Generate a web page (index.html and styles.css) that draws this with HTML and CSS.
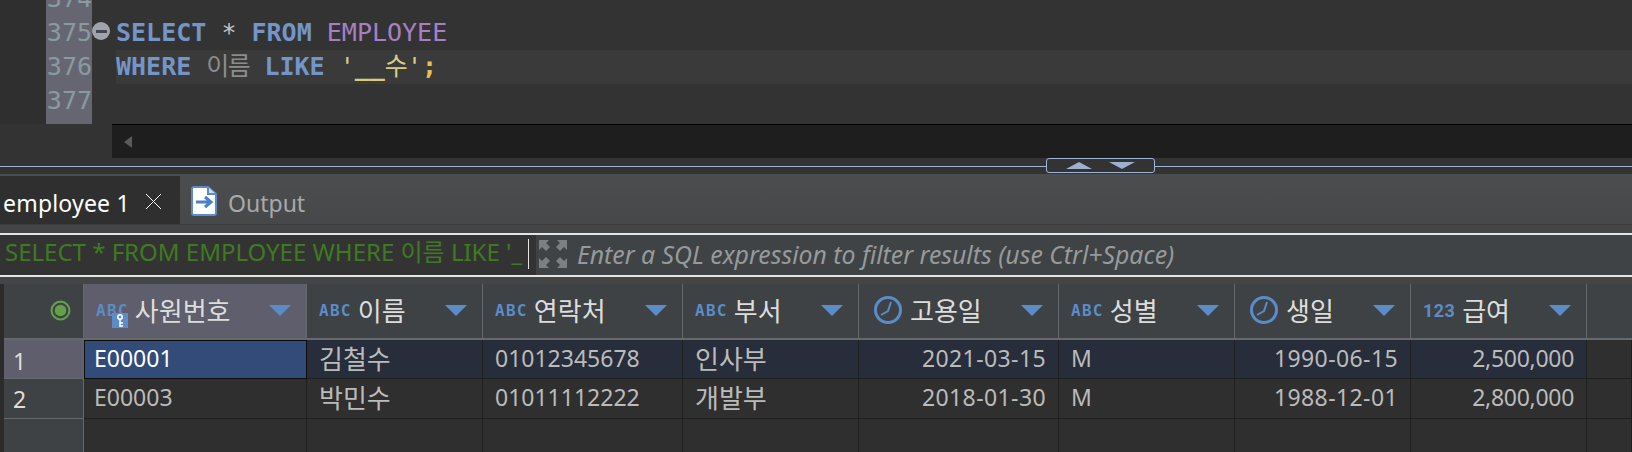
FILE: index.html
```html
<!DOCTYPE html>
<html lang="ko">
<head>
  <meta charset="UTF-8">
  <title>SQL Editor</title>
  <link rel="stylesheet" href="styles.css">
</head>
<body>

  <!-- SQL editor -->
  <div class="editor">
    <div class="editor-top">
      <div class="outer-margin"></div>
      <div class="gutter">
        <div class="gutter-lines">
          <div class="line-no">374</div>
          <div class="line-no">375</div>
          <div class="line-no">376</div>
          <div class="line-no">377</div>
        </div>
      </div>
      <div class="fold-col">
        <div class="fold"><span class="fold-minus"></span></div>
      </div>
      <div class="code">
        <div class="code-lines">
          <div class="code-line"></div>
          <div class="code-line"><span class="kw">SELECT</span> <span class="star">*</span> <span class="kw">FROM</span> <span class="table-name">EMPLOYEE</span></div>
          <div class="code-line current"><span class="kw">WHERE</span> <span class="column-name">이름</span> <span class="kw">LIKE</span> <span class="str">'<b>__</b><span class="str-ko">수</span>'</span><span class="semi">;</span></div>
          <div class="code-line"></div>
        </div>
      </div>
    </div>
    <div class="hscroll-row">
      <div class="hscroll"><span class="hscroll-arrow"></span></div>
    </div>
  </div>

  <!-- sash between editor and results -->
  <div class="sash">
    <div class="sash-btn">
      <span class="sash-up"></span>
      <span class="sash-down"></span>
    </div>
  </div>

  <div class="results-head">
    <!-- result tabs -->
    <div class="tabs">
      <div class="tab active">
        <span>employee 1</span>
        <svg class="tab-close" width="17" height="17" viewBox="0 0 17 17"><path d="M1 1L16 16M16 1L1 16" stroke="#fff" stroke-width="1" fill="none"/></svg>
      </div>
      <div class="tab">
        <svg width="26" height="30" viewBox="0 0 26 30">
          <path d="M1 3Q1 1 3 1H17L25 8V27Q25 29 23 29H3Q1 29 1 27Z" fill="#fff" stroke="#5b8cc9" stroke-width="2"/>
          <path d="M17 1V8H25" fill="#cfdcee" stroke="#5b8cc9" stroke-width="2"/>
          <path d="M5 16H18M14 11L20 16L14 21" stroke="#4a80c4" stroke-width="3" fill="none"/>
        </svg>
        <span>Output</span>
      </div>
    </div>

    <!-- filter bar -->
    <div class="filter">
      <div class="filter-query"><span class="filter-text">SELECT * FROM EMPLOYEE WHERE 이름 LIKE '_</span></div>
      <div class="filter-input">
        <svg width="30" height="30" viewBox="0 0 30 30" fill="#7d8082">
          <path d="M1 1H11L8 4L12 8L8 12L4 8L1 11Z"/>
          <path d="M29 1H19L22 4L18 8L22 12L26 8L29 11Z"/>
          <path d="M1 29H11L8 26L12 22L8 18L4 22L1 19Z"/>
          <path d="M29 29H19L22 26L18 22L22 18L26 22L29 19Z"/>
        </svg>
        <span class="filter-hint">Enter a SQL expression to filter results (use Ctrl+Space)</span>
      </div>
    </div>
  </div>

  <!-- result grid -->
  <div class="grid-wrap">
    <div class="grid">
      <div class="hd corner">
        <svg width="21" height="21" viewBox="0 0 20 20"><circle cx="10" cy="10" r="8.5" fill="none" stroke="#64a04a" stroke-width="2"/><circle cx="10" cy="10" r="5.5" fill="#64a04a"/></svg>
      </div>
      <div class="hd selected">
        <span class="type-abc">ABC</span>
        <svg class="key" width="16" height="15" viewBox="0 0 16 15"><rect width="16" height="15" fill="#5b8cc9"/><circle cx="8" cy="4" r="2.2" fill="none" stroke="#fff" stroke-width="1.5"/><path d="M8 6V14M8 10H11M8 13H11" stroke="#fff" stroke-width="1.5"/></svg>
        <span class="hd-label">사원번호</span><span class="sort"></span>
      </div>
      <div class="hd"><span class="type-abc">ABC</span><span class="hd-label">이름</span><span class="sort"></span></div>
      <div class="hd"><span class="type-abc">ABC</span><span class="hd-label">연락처</span><span class="sort"></span></div>
      <div class="hd"><span class="type-abc">ABC</span><span class="hd-label">부서</span><span class="sort"></span></div>
      <div class="hd date">
        <svg class="clock" width="30" height="30" viewBox="0 0 30 30"><circle cx="15" cy="15" r="12.5" fill="none" stroke="#5b8cc9" stroke-width="3"/><path d="M18 7L15 16L8 20" fill="none" stroke="#5b8cc9" stroke-width="2"/></svg>
        <span class="hd-label">고용일</span><span class="sort"></span>
      </div>
      <div class="hd"><span class="type-abc">ABC</span><span class="hd-label">성별</span><span class="sort"></span></div>
      <div class="hd date">
        <svg class="clock" width="30" height="30" viewBox="0 0 30 30"><circle cx="15" cy="15" r="12.5" fill="none" stroke="#5b8cc9" stroke-width="3"/><path d="M18 7L15 16L8 20" fill="none" stroke="#5b8cc9" stroke-width="2"/></svg>
        <span class="hd-label">생일</span><span class="sort"></span>
      </div>
      <div class="hd"><span class="type-num">123</span><span class="hd-label">급여</span><span class="sort"></span></div>
      <div class="hd blank"></div>

      <div class="row-no active">1</div>
      <div class="cell hl focus">E00001</div>
      <div class="cell hl ko">김철수</div>
      <div class="cell hl">01012345678</div>
      <div class="cell hl ko">인사부</div>
      <div class="cell hl right date-val">2021-03-15</div>
      <div class="cell hl">M</div>
      <div class="cell hl right date-val">1990-06-15</div>
      <div class="cell hl right num-val">2,500,000</div>
      <div class="cell"></div>

      <div class="row-no">2</div>
      <div class="cell first">E00003</div>
      <div class="cell ko">박민수</div>
      <div class="cell">01011112222</div>
      <div class="cell ko">개발부</div>
      <div class="cell right date-val">2018-01-30</div>
      <div class="cell">M</div>
      <div class="cell right date-val">1988-12-01</div>
      <div class="cell right num-val">2,800,000</div>
      <div class="cell"></div>

      <div class="row-no"></div>
      <div class="cell"></div>
      <div class="cell"></div>
      <div class="cell"></div>
      <div class="cell"></div>
      <div class="cell"></div>
      <div class="cell"></div>
      <div class="cell"></div>
      <div class="cell"></div>
      <div class="cell"></div>
    </div>
  </div>

</body>
</html>
```

FILE: styles.css
```css
html, body {
  margin: 0;
  height: 452px;
  overflow: hidden;
}

body {
  background: #333;
  font-family: "Noto Sans", "Noto Sans CJK KR", sans-serif;
  font-size: 23px;
  color: #bbb;
  position: relative;
}

/* editor */
.editor {
  height: 166px;
  background: #333;
  overflow: hidden;
}

.editor-top {
  display: flex;
  height: 124px;
  overflow: hidden;
}

.outer-margin {
  width: 46px;
  background: #2f2f2f;
}

.gutter {
  width: 46px;
  background: #666673;
  overflow: hidden;
}

.gutter-lines,
.code-lines {
  margin-top: -18px;
}

.line-no,
.code-line {
  height: 34px;
  line-height: 34px;
  font-family: "DejaVu Sans Mono", "Noto Sans CJK KR", monospace;
  font-size: 25px;
  white-space: pre;
}

.line-no {
  color: #8a9aa0;
  text-align: right;
  overflow: hidden;
}

.fold-col {
  width: 24px;
  background: #333;
  padding-top: 22px;
  box-sizing: border-box;
}

.fold {
  width: 18px;
  height: 18px;
  border-radius: 50%;
  background: #9fa3ab;
  display: flex;
  align-items: center;
  justify-content: center;
}

.fold-minus {
  width: 11px;
  height: 3px;
  background: #444650;
}

.code {
  flex: 1;
}

.current {
  background: #3a3a3a;
}

.kw {
  color: #7395c8;
  font-weight: bold;
}

.star { color: #c4c4c4; }
.table-name { color: #a87fc4; }
.column-name { color: #8c8c8c; letter-spacing: -1.5px; }
.str { color: #d6cd84; }
.str-ko { letter-spacing: -1px; }
.semi { color: #e8c04c; font-weight: bold; }

.hscroll-row {
  padding-left: 112px;
}

.hscroll {
  height: 33px;
  background: #1e1e1e;
  border-top: 1px solid #000;
  display: flex;
  align-items: center;
  padding-left: 12px;
}

.hscroll-arrow {
  width: 0;
  height: 0;
  border-top: 6px solid transparent;
  border-bottom: 6px solid transparent;
  border-right: 8px solid #5a5a5a;
}

/* sash */
.sash {
  height: 1px;
  background: #a0b4d8;
  margin-bottom: 7px;
}

.sash-btn {
  position: absolute;
  left: 1046px;
  top: 158px;
  width: 109px;
  height: 15px;
  box-sizing: border-box;
  border: 1px solid #a0b4d8;
  border-radius: 3px;
  background: #333;
  display: flex;
  justify-content: center;
  align-items: center;
  gap: 17px;
}

.sash-up {
  width: 0;
  height: 0;
  border-left: 13px solid transparent;
  border-right: 13px solid transparent;
  border-bottom: 7px solid #9db0d0;
}

.sash-down {
  width: 0;
  height: 0;
  border-left: 13px solid transparent;
  border-right: 13px solid transparent;
  border-top: 7px solid #9db0d0;
}

.results-head {
  background: #434547;
  padding-bottom: 7px;
}

/* tabs */
.tabs {
  display: flex;
  height: 51px;
  padding-top: 2px;
  box-sizing: border-box;
  background: linear-gradient(#4c4d4f, #47484a);
  border-bottom: 1px solid #3c3c3c;
}

.tab {
  display: flex;
  align-items: center;
  gap: 11px;
  padding-left: 11px;
  padding-top: 5px;
  box-sizing: border-box;
  color: #a9a9a9;
  font-size: 23px;
}

.tab svg {
  margin-top: -3px;
}

.tab.active {
  width: 180px;
  padding-left: 3px;
  gap: 15px;
  background: #2f2f2f;
  color: #fff;
  letter-spacing: 0.2px;
}

/* filter */
.filter {
  display: flex;
  height: 44px;
  margin-top: 8px;
  box-sizing: border-box;
  border-top: 2px solid #e4e4e4;
  border-bottom: 2px solid #e4e4e4;
  background: #3f4345;
}

.filter-query {
  width: 536px;
  box-sizing: border-box;
  flex-shrink: 0;
  background: #333;
  padding: 3px 0 0 5px;
}

.filter-text {
  display: inline-block;
  width: 523px;
  height: 30px;
  line-height: 26px;
  margin-top: 1px;
  border-right: 1px solid #e4e4e4;
  white-space: pre;
  color: #3f7a22;
  font-size: 24px;
  vertical-align: top;
}

.filter-input {
  display: flex;
  align-items: center;
  gap: 9px;
  padding-left: 2px;
}

.filter-input svg {
  margin-top: -3px;
}

.filter-hint {
  color: #979a9c;
  font-style: italic;
  font-size: 24.8px;
  margin-top: -2px;
  white-space: nowrap;
}

/* result grid */
.grid-wrap {
  height: 170px;
  padding-left: 4px;
  background: #2b2b2b;
}

.grid {
  display: grid;
  grid-template-columns: 80px 223px 176px 200px 176px 200px 176px 176px 176px 45px;
  grid-template-rows: 56px 39px 40px 35px;
}

.hd {
  position: relative;
  display: flex;
  align-items: center;
  padding: 0 15px 2px 12px;
  box-sizing: border-box;
  background: #3e4245;
  border-right: 1px solid #66696b;
  border-bottom: 2px solid #66696b;
  color: #ddd;
  font-size: 26px;
}

.hd.corner {
  justify-content: flex-end;
  padding-right: 12px;
}

.hd.selected {
  background: #5f5e6c;
}

.hd.date {
  padding-left: 14px;
}

.hd.blank {
  border-right: 0;
}

.type-abc {
  font-family: "DejaVu Sans Mono", monospace;
  font-weight: bold;
  font-size: 16px;
  letter-spacing: 1.3px;
  color: #5b8cc9;
  margin-right: 6px;
}

.type-num {
  font-family: "Roboto", sans-serif;
  font-weight: bold;
  font-size: 18px;
  letter-spacing: 0.4px;
  color: #5b8cc9;
  margin-right: 7px;
}

.clock {
  margin-right: 7px;
}

.key {
  position: absolute;
  left: 28px;
  top: 29px;
}

.sort {
  margin-left: auto;
  width: 0;
  height: 0;
  border-left: 11px solid transparent;
  border-right: 11px solid transparent;
  border-top: 11px solid #5b8cc9;
}

.row-no {
  display: flex;
  align-items: center;
  padding-left: 9px;
  background: #3e4245;
  border-right: 1px solid #66696b;
  border-bottom: 1px solid #66696b;
  color: #ddd;
}

.row-no.active {
  background: #5f5e6c;
  padding-top: 3px;
}

.cell {
  display: flex;
  align-items: center;
  padding: 0 12px 3px;
  box-sizing: border-box;
  background: #2f2f2f;
  border-right: 1px solid #1f1f1f;
  border-bottom: 1px solid #1f1f1f;
  white-space: nowrap;
}

.cell.hl {
  background: #272d3a;
}

.cell.ko {
  font-size: 26px;
}

.cell.first {
  padding-left: 10px;
}

.cell.focus {
  background: #324b78;
  border: 1px solid #0c0c0c;
  padding-left: 9px;
  color: #fff;
}

.cell.right {
  justify-content: flex-end;
}

.date-val {
  letter-spacing: 0.4px;
}

.num-val {
  letter-spacing: -0.3px;
}
```
